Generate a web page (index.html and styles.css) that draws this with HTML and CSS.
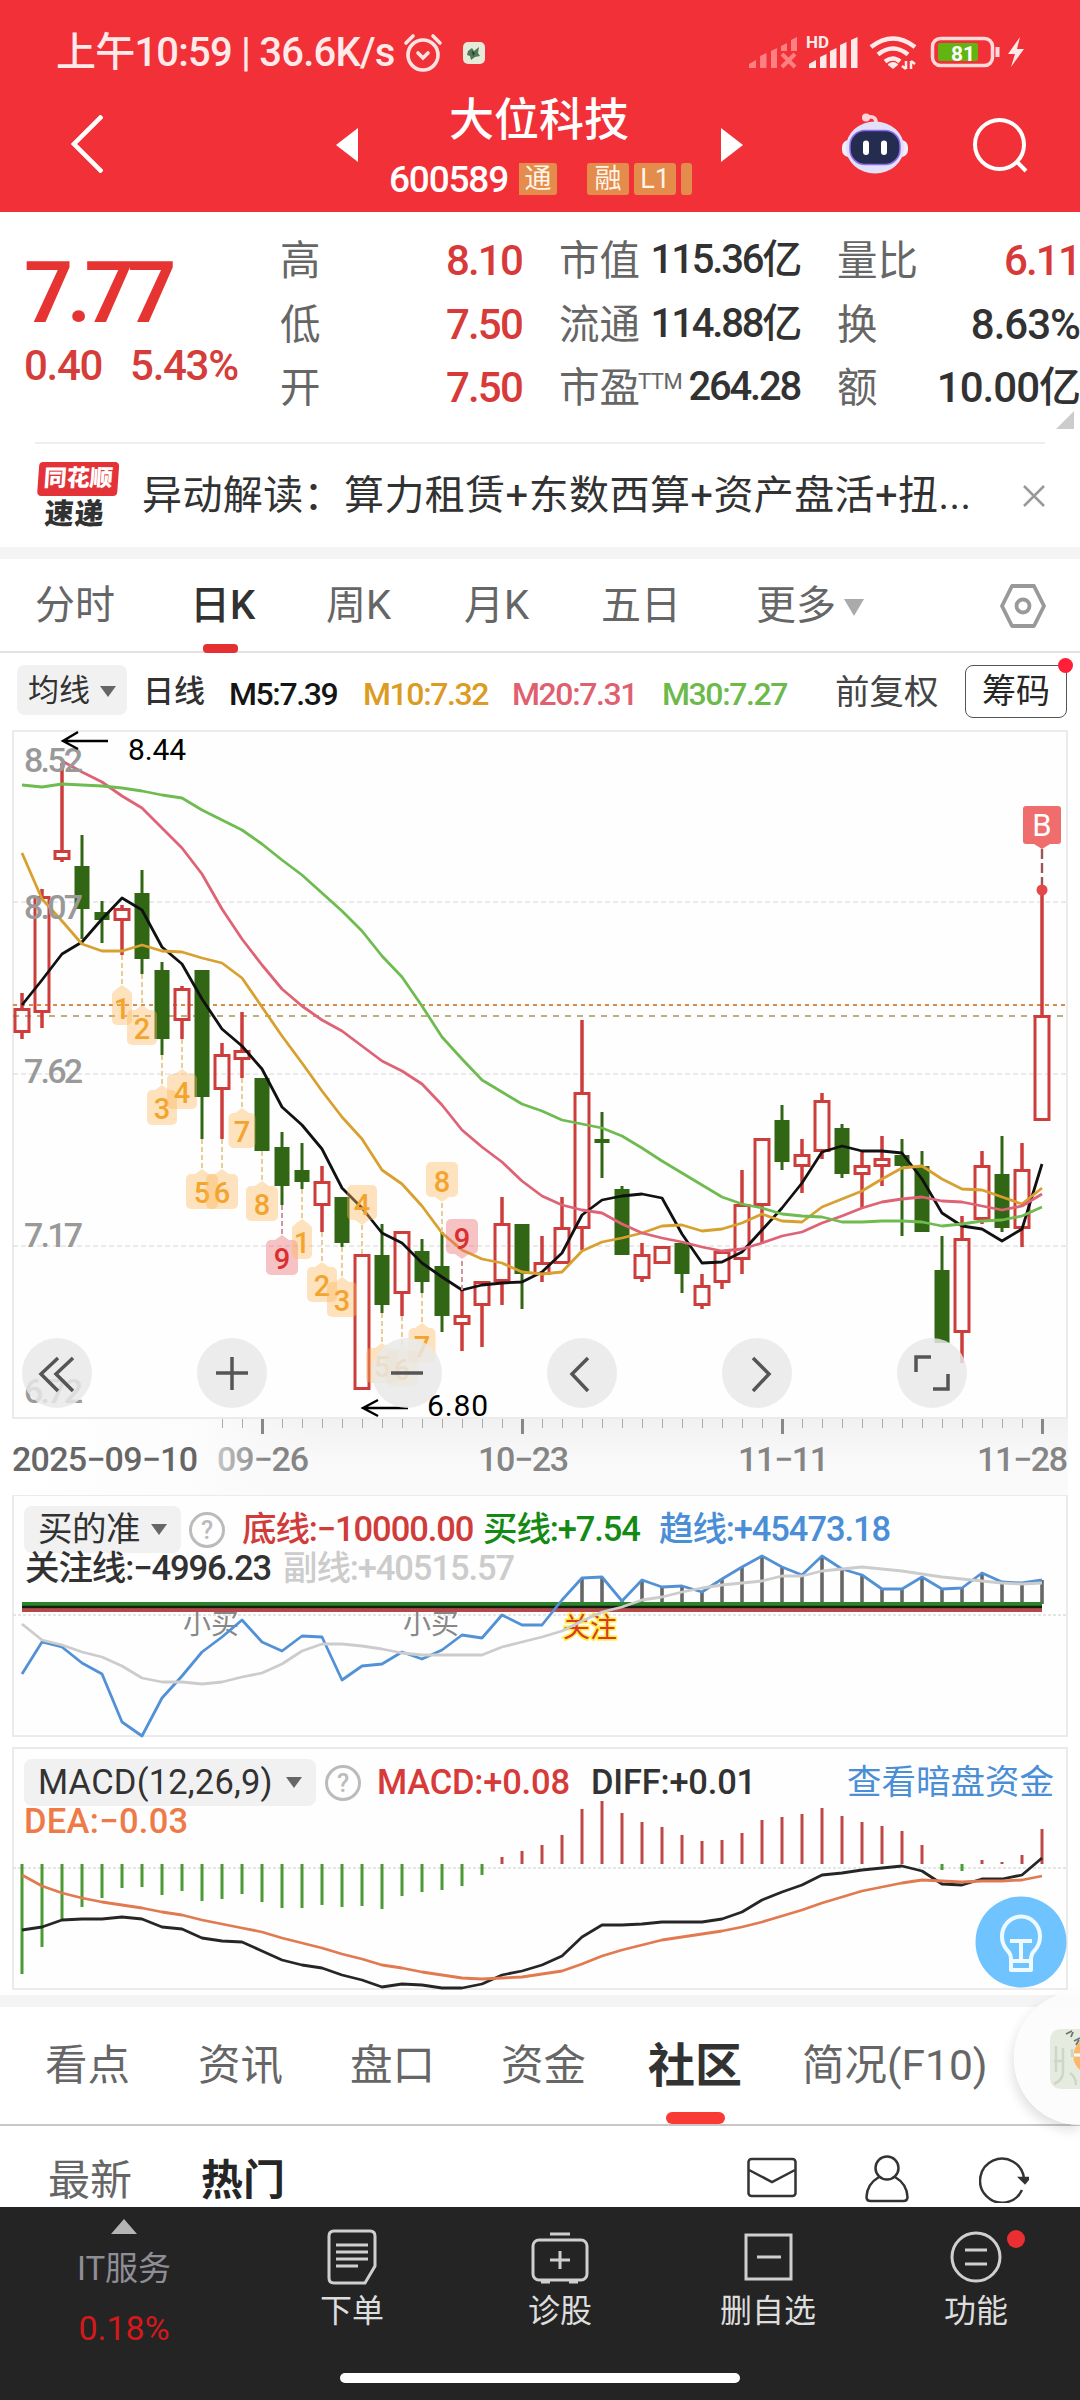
FILE: index.html
```html
<!DOCTYPE html>
<html lang="zh-CN">
<head>
<meta charset="utf-8">
<title>大位科技 600589</title>
<link rel="stylesheet" href="styles.css">
</head>
<body>
<header class="top">
  <div class="status">
    <span class="clock">上午10:59 | 36.6K/s</span>
    <svg class="alarm" width="40" height="40" viewBox="0 0 40 40" fill="none" stroke="#ffe3e3" stroke-width="3.6" stroke-linecap="round"><circle cx="20" cy="22" r="15"/><path d="M3 10 10 3M37 10 30 3M15 20l5 5 5-5"/></svg>
    <svg class="app" width="22" height="22" viewBox="0 0 22 22"><rect width="22" height="22" rx="5" fill="#e6ead9"/><path d="M5 9l4-3 2 3 5-4-1 6 2 3-5 1-4 3-1-4-3-1z" fill="#4f7a55"/><path d="M9 9l3 2-2 3z" fill="#1f3f2a"/></svg>
    <svg class="signals" width="280" height="40" viewBox="746 32 280 40">
      <path fill="#ff8083" d="M749 68v-4l7-4v8zM760 68V56l6.500-3v15zM771 68V51l6-3v20zM781 51v-5l6-3v8zM791 51V40l6-3v14z"/><path d="M782 54l13 13M795 54l-13 13" stroke="#ff8083" stroke-width="4"/>
      <text x="806" y="48" class="hd">HD</text>
      <path fill="#ffeaea" d="M809 68v-4l7-4v8zM820 68V57l6.500-3v14zM830 68V51l6.500-3v20zM840 68V45l6.500-3v26zM851 68V40l6.500-3v31z"/>
      <g fill="none" stroke="#ffeaea" stroke-width="4.600"><path d="M871 47q22-17 44 0M878 54.500q15-12 30 0M885 61.500q8-6 15 0"/></g>
      <path d="M888 64q5-4 10 0v1l-5 4-5-4z" fill="#ffeaea"/><path d="M906 61v8m-4-3 4 3M911 69v-8m4 3-4-3" stroke="#ffeaea" stroke-width="2.500" fill="none"/>
      <rect x="932.500" y="38.500" width="60" height="27" rx="8" fill="none" stroke="#ffd9da" stroke-width="3.500"/><rect x="938" y="43" width="40" height="18" rx="2" fill="#62b511"/><text x="951" y="61" class="bat">81</text><path d="M997.500 47v10" stroke="#ffd9da" stroke-width="4"/>
      <path d="M1020 37l-12 17h7l-4 13 13-18h-7z" fill="#ffeaea"/>
    </svg>
  </div>
  <div class="title-bar">
    <svg width="32" height="58" viewBox="0 0 32 58" fill="none" stroke="#fff" stroke-width="4.500"><path d="M31 1 3 29l28 28"/></svg>
    <svg width="22" height="34" viewBox="0 0 22 34"><path d="M22 0v34L0 17z" fill="#fff"/></svg>
    <div class="stock">
      <h1>大位科技</h1>
      <div class="code-row"><span class="code">600589</span><span class="tag first">通</span><span class="tag">融</span><span class="tag">L1</span><span class="tag sliver"></span></div>
    </div>
    <svg width="22" height="34" viewBox="0 0 22 34"><path d="M0 0v34l22-17z" fill="#fff"/></svg>
    <svg class="robot" width="66" height="62" viewBox="0 0 66 62"><path d="M24 4q11-2 10 7" fill="none" stroke="#ffd3da" stroke-width="3.500"/><circle cx="24" cy="4.500" r="4" fill="#ffd3da"/><rect y="27" width="66" height="17" rx="7" fill="#efedff"/><ellipse cx="33" cy="34.500" rx="29" ry="26" fill="#e3e1fa"/><rect x="8" y="17.500" width="50" height="34" rx="15" fill="#242d50" stroke="#8b6bf0" stroke-width="1.500"/><path d="M24 30.500v8.500M42 30.500v8.500" stroke="#fff" stroke-width="6" stroke-linecap="round"/></svg>
    <svg class="search" width="56" height="56" viewBox="0 0 56 56" fill="none" stroke="#fff" stroke-width="4"><circle cx="26.500" cy="26.500" r="24.500"/><path d="M43 43l10 10"/></svg>
  </div>
</header>

<section class="quote">
  <div class="price"><div class="last">7.77</div><div class="change"><span>0.40</span><span>5.43%</span></div></div>
  <dl class="stats">
    <dt>高</dt><dd class="up">8.10</dd><dt>市值</dt><dd class="tight">115.36亿</dd><dt>量比</dt><dd class="up">6.11</dd>
    <dt>低</dt><dd class="up">7.50</dd><dt>流通</dt><dd class="tight">114.88亿</dd><dt>换</dt><dd class="wide">8.63%</dd>
    <dt>开</dt><dd class="up">7.50</dd><dt>市盈<sup>TTM</sup></dt><dd class="tight">264.28</dd><dt>额</dt><dd class="wide">10.00亿</dd>
  </dl>
  <i class="corner"></i>
</section>

<section class="news">
  <div class="logo"><b>同花顺</b><em>速递</em></div>
  <p>异动解读：算力租赁+东数西算+资产盘活+扭...</p>
  <svg width="22" height="22" viewBox="0 0 22 22" stroke="#999" stroke-width="2.500"><path d="M1 1l20 20M21 1 1 21"/></svg>
</section>

<nav class="periods">
  <span>分时</span><span class="on">日K</span><span>周K</span><span>月K</span><span>五日</span><span class="more">更多<i class="tri light"></i></span>
  <svg width="46" height="44" viewBox="0 0 46 44" fill="none" stroke="#999" stroke-width="3.800" stroke-linejoin="round"><path d="M12 2h22l10 20-10 20H12L2 22z"/><circle cx="23" cy="22" r="6.500"/></svg>
</nav>

<div class="ma">
  <span class="pill">均线<i class="tri"></i></span><span class="k">日线</span><span class="n">M5:7.39</span><span class="n c10">M10:7.32</span><span class="n c20">M20:7.31</span><span class="n c30">M30:7.27</span><span class="adj">前复权</span><span class="chip">筹码</span>
</div>

<section class="chart">
  <svg id="kline" width="1080" height="765" viewBox="0 730 1080 765"></svg>
  <div class="controls">
    <button><svg viewBox="0 0 70 70"><path d="M36 20 19 36l17 17M51 20 34 36l17 17"/></svg></button>
    <button><svg viewBox="0 0 70 70"><path d="M35 19v33M19 35h32"/></svg></button>
    <button><svg viewBox="0 0 70 70"><path d="M19 35h32"/></svg></button>
    <button><svg viewBox="0 0 70 70"><path d="M41 20 25 36l16 17"/></svg></button>
    <button><svg viewBox="0 0 70 70"><path d="M31 20l16 16-16 17"/></svg></button>
    <button><svg viewBox="0 0 70 70"><path d="M19 34V19h15M36 51h15V36"/></svg></button>
  </div>
</section>

<section class="panel">
  <svg id="trend" width="1080" height="252" viewBox="0 1495 1080 252"></svg>
  <div class="legend l-trend">
    <span class="pill">买的准<i class="tri"></i></span><i class="help">?</i><span class="red">底线:−10000.00</span><span class="green">买线:+7.54</span><span class="blue">趋线:+45473.18</span>
  </div>
  <div class="legend l-trend2"><span>关注线:−4996.23</span><span class="grey">副线:+40515.57</span></div>
</section>

<section class="panel">
  <svg id="macd" width="1080" height="248" viewBox="0 1747 1080 248"></svg>
  <div class="legend l-macd">
    <span class="pill">MACD(12,26,9)<i class="tri"></i></span><i class="help">?</i><span class="red2">MACD:+0.08</span><span>DIFF:+0.01</span><a class="blue">查看暗盘资金</a>
  </div>
  <div class="legend l-macd2"><span class="orange">DEA:−0.03</span></div>
  <svg class="bulb" width="92" height="92" viewBox="0 0 92 92"><circle cx="46" cy="46" r="45.500" fill="#6fc3fe"/><g fill="none" stroke="#eefaff" stroke-width="4" stroke-linejoin="round"><path d="M36 74V63q0-5-4-9a19 20 0 1 1 28 0q-4 4-4 9v11zM37 65h18"/><path d="M35 45h22M46 45v20"/></g></svg>
</section>

<nav class="sections">
  <span>看点</span><span>资讯</span><span>盘口</span><span>资金</span><span class="on">社区</span><span>简况(F10)</span>
  <div class="floater"><svg width="30" height="60" viewBox="0 0 30 60"><path d="M12 0h18v60H12Q0 60 0 48V12Q0 0 12 0z" fill="#e6ebdf"/><path d="M6 17v26M13 19v24q0 8-9 12M4 32h9M20 44q6 4 6 12M22 20v8" stroke="#cdd6c8" stroke-width="2.500" fill="none"/><path d="M16 5l6-3M21 8l2-5M24 12l6-3M26 16l3-5" stroke="#6d766c" stroke-width="1.800" fill="none"/><path d="M30 13a18 18 0 0 0 0 28z" fill="#fbb868"/><path d="M24 26h6" stroke="#fff" stroke-width="3"/></svg></div>
</nav>

<div class="feed">
  <span>最新</span><span class="on">热门</span>
  <svg width="50" height="46" viewBox="0 0 50 46"><rect x="1.500" y="4" width="47" height="37" rx="3"/><path d="M2 15l23 12 23-12"/></svg>
  <svg width="44" height="48" viewBox="0 0 44 48"><circle cx="22" cy="13" r="11.500"/><path d="M14 22Q2 29 1.500 42q0 4 4 4h33q4 0 4-4Q42 29 30 22"/></svg>
  <svg width="50" height="48" viewBox="0 0 50 48"><path d="M43 35A22 22 0 1 1 45 24"/><path d="M41 23h9l-4 5z" fill="#333"/></svg>
</div>

<footer class="bar">
  <div class="index"><i></i><span>IT服务</span><b>0.18%</b></div>
  <div class="act"><svg viewBox="0 0 60 56"><path d="M12 2h36q5 0 5 5v30L43 54H12q-5 0-5-5V7q0-5 5-5zM14 16h32M14 23h32M14 30h32M14 37h22"/></svg><span>下单</span></div>
  <div class="act"><svg viewBox="0 0 60 56"><rect x="3" y="11" width="54" height="40" rx="6"/><path d="M20 5h20M30 22v18M20 31h20M11 53h9M39 53h9"/></svg><span>诊股</span></div>
  <div class="act"><svg viewBox="0 0 60 56"><path d="M8 6h45v44H8zM19 28h24"/></svg><span>删自选</span></div>
  <div class="act"><svg viewBox="0 0 60 56"><circle cx="30" cy="28" r="24"/><path d="M19 21h22M19 35h22"/></svg><span>功能</span><u></u></div>
  <div class="home"></div>
</footer>
<script src="chart.js"></script>
</body>
</html>
```
FILE: styles.css
```css
*{box-sizing:border-box;margin:0;padding:0}
body{width:1080px;height:2400px;overflow:hidden;background:#fff;color:#323232;font-family:Roboto,"Noto Sans CJK SC",sans-serif;font-size:40px;line-height:1;-webkit-font-smoothing:antialiased}
i,em{font-style:normal}
svg{display:block;flex:none}
span,dt,dd,p,b,a{white-space:nowrap}

.top{height:212px;background:#f13038;color:#fff}
.status{height:104px;display:flex;align-items:center;padding:2px 54px 0 56px}
.clock{width:347px;font-size:40px;font-weight:500;letter-spacing:-.8px;color:#ffe9e9}
.app{margin-left:20px}
.signals{margin:-2px 0 0 auto}
.hd{font-size:17px;font-weight:700;fill:#ffeaea}
.bat{font-size:21px;font-weight:700;fill:#fff}
.title-bar{height:108px;display:grid;grid-template-columns:265px 53px 332px 101px 131px 1fr;padding-left:71px;align-items:start}
.title-bar>svg{margin-top:11px}
.title-bar>svg:nth-of-type(2),.title-bar>svg:nth-of-type(3){margin-top:24px}
.title-bar .robot{margin:9px 0 0 20px}
.title-bar .search{margin:14px 0 0 20px}
.stock{width:304px;margin-top:-6px}
h1{font-size:45px;font-weight:500;line-height:46px;text-align:center;margin-left:-4px}
.code-row{display:flex;height:32px;margin-top:19px;align-items:center}
.code{width:130px;font-size:37px;font-weight:500;line-height:34px;padding-top:2px;letter-spacing:-1.2px}
.tag{width:42px;height:32px;margin-right:5px;background:#e48c4b;border-radius:3px;font-size:27px;line-height:33px;text-align:center;color:#fff4e8}
.tag.first{width:38px;margin-right:30px;border-radius:0 3px 3px 0}
.tag.sliver{width:11px;margin:0}

.quote{position:relative;height:230px;display:flex}
.price{width:281px;padding:43px 0 0 24px;color:#e63432}
.last{font-size:86px;line-height:76px;font-weight:600;letter-spacing:-6.5px}
.change{display:flex;gap:28px;margin-top:14px;font-size:42px;line-height:42px;font-weight:500;letter-spacing:-1.3px;color:#d43d3a}
.stats{display:grid;grid-template-columns:60px 181px 38px 90px 150px 38px 90px 152px;grid-template-rows:repeat(3,63.500px);padding-top:18px}
.stats dt:nth-of-type(3n+1){grid-column:1}
.stats dd:nth-of-type(3n+1){grid-column:2}
.stats dt:nth-of-type(3n+2){grid-column:4}
.stats dd:nth-of-type(3n+2){grid-column:5}
.stats dt:nth-of-type(3n){grid-column:7}
.stats dd:nth-of-type(3n){grid-column:8}
dt,dd{line-height:62px}
dt{position:relative;left:-1px;font-size:40.500px;color:#666}
dd{font-size:42px;font-weight:500;letter-spacing:-1.8px;display:flex;justify-content:flex-end}
dd.up{color:#d73a38}
dd.tight{font-size:40px;letter-spacing:-2.2px;line-height:60px}
dd.wide{letter-spacing:-1px}
sup{position:absolute;left:79px;top:9px;font-size:22px;line-height:32px;letter-spacing:-.5px}
.corner{position:absolute;right:6px;bottom:13px;border-left:18px solid transparent;border-bottom:18px solid #ccc}

.news{height:105px;display:grid;grid-template-columns:107px 881px 22px;align-items:center;margin-left:35px;width:1010px;border-top:2px solid #eee}
.news p{font-size:40px;letter-spacing:.4px}
.logo{width:82px;height:68px;transform:skewX(-4deg);text-align:center}
.logo b{display:block;height:34px;margin-left:2px;background:#e43338;border-radius:4px;color:#fff;font-size:23px;font-weight:900;line-height:34px}
.logo em{display:block;font-size:29px;line-height:36px;font-weight:900;letter-spacing:1px}

.periods{height:106px;border-top:12px solid #f4f4f4;border-bottom:2px solid #e2e2e2;display:grid;grid-template-columns:155px 136px 138px 137px 155px 244px 46px;padding-left:35px;color:#666;line-height:94px}
.periods svg{margin-top:25px}
.periods .on{position:relative;color:#323232;font-weight:500}
.periods .on::after{content:"";position:absolute;left:13px;bottom:0;width:35px;height:9px;border-radius:4px;background:#e42f33}
.tri{display:inline-block;border:8px solid transparent;border-top:11px solid #666;border-bottom:0}
.tri.light{border-width:10px;border-top:17px solid #aaa;border-bottom:0;margin-left:8px;vertical-align:3px}

.ma{height:77px;display:grid;grid-template-columns:126px 86px 134px 149px 150px 173px 130px 102px;padding:12px 0 0 17px;line-height:54px;font-size:31px}
.pill{background:#f1f1f1;border-radius:8px;display:flex;align-items:center;justify-content:space-between}
.ma .pill{width:110px;height:50px;padding:2px 11px 0}
.k{font-weight:500}
.n{font-size:32px;font-weight:500;letter-spacing:-1.400px;line-height:58px;color:#151515}
.c10{color:#dc9b23}.c20{color:#df6070}.c30{color:#6cb94c}
.adj{font-size:34.500px;color:#444}
.chip{position:relative;height:53px;border:1.500px solid #555;border-radius:8px;font-size:34px;line-height:51px;text-align:center;color:#262626}
.chip::after{content:"";position:absolute;right:-7px;top:-8px;width:15px;height:15px;border-radius:50%;background:#ff1f36}

.chart,.panel{position:relative}
.controls{position:absolute;left:22px;top:608px;display:flex;gap:105px}
.controls button{width:70px;height:70px;border:0;border-radius:50%;background:rgba(232,232,232,.84)}
.controls svg{width:70px;height:70px;fill:none;stroke:#555;stroke-width:3.500}
svg text{font-family:Roboto,"Noto Sans CJK SC",sans-serif}
.axis{font-size:34px;font-weight:500;fill:#999}
.peak{font-size:30px;fill:#000}
.num{font-size:29px;font-weight:500;text-anchor:middle;fill:#f3a42e}
.num.nine{fill:#d9302f}
.date{font-size:34px;font-weight:500;fill:#858585}
.date.first{fill:#666}
.date.faded{fill:url(#ink)}
.flag{font-size:31px;fill:#fff;text-anchor:middle}
.note{font-size:28px;fill:#888}
.watch{font-size:27px;fill:#d83a2b;stroke:#ffee3c;stroke-width:3;paint-order:stroke}

.legend{position:absolute;display:grid;line-height:47px;font-size:34.500px;font-weight:500}
.legend .pill{height:47px;padding:0 14px;font-weight:400}
.legend>span{letter-spacing:-1.1px}
.help{width:36px;height:36px;margin-top:6px;border:3px solid #bbb;border-radius:50%;font-size:25px;line-height:31px;text-align:center;color:#bbb}
.l-trend{left:24px;top:11px;grid-template-columns:157px 8px 53px 241px 176px 230px}
.l-trend .help,.l-macd .help{grid-column:3}
.l-trend .pill{letter-spacing:-.5px}
.l-trend2{left:25px;top:50px;grid-template-columns:258px 230px}
.l-macd{left:24px;top:12px;grid-template-columns:292px 9px 52px 214px 256px 210px}
.l-macd .pill{letter-spacing:.2px}
.l-macd>span{letter-spacing:-.2px}
.l-macd a{font-weight:400}
.l-macd2{left:24px;top:51px}
.l-macd2>span{letter-spacing:.3px}
.red{color:#cf3c39}.red2{color:#d63a39}.green{color:#138a13}.blue{color:#4a8ed8}.grey{color:#ccc}.orange{color:#ee7a48}
.bulb{position:absolute;left:975px;top:149px}

.sections{position:relative;height:131px;border-top:12px solid #f4f4f4;border-bottom:2px solid #c7c7c7;display:grid;grid-template-columns:153px 152px 151px 147px 154px 260px;padding-left:45px;font-size:42.500px;line-height:117px;color:#666}
.sections .on{position:relative;font-size:47px;font-weight:700;color:#323232}
.sections .on::after{content:"";position:absolute;left:18px;bottom:0;width:59px;height:12px;border-radius:6px;background:#fa3a34}
.floater{position:absolute;right:0;top:-16px;width:66px;height:134px;border-radius:67px 0 0 67px;background:rgba(252,252,252,.9);box-shadow:-2px 6px 12px rgba(0,0,0,.12);padding:38px 0 0 36px}
.feed{height:81px;display:grid;grid-template-columns:153px 546px 118px 114px 50px;padding-left:48px;font-size:42px;line-height:109px;color:#666}
.feed .on{color:#262626;font-weight:700}
.feed svg{margin-top:29px;fill:none;stroke:#333;stroke-width:2.500}

.bar{position:relative;height:193px;background:#242424;display:grid;grid-template-columns:248px repeat(4,208px);color:#ddd}
.index{display:flex;flex-direction:column;align-items:center;padding-top:12px}
.index i{border:13px solid transparent;border-bottom:15px solid #b5b5b5;border-top:0}
.index span{font-size:33px;line-height:46px;margin-top:12px;color:#8f8d96}
.index b{font-size:34px;font-weight:400;line-height:40px;margin-top:16px;color:#d5191b}
.act{position:relative;display:flex;flex-direction:column;align-items:center;padding-top:22px}
.act svg{width:60px;height:56px;fill:none;stroke:#cfcfcf;stroke-width:3}
.act span{font-size:32px;line-height:44px;margin-top:4px}
.act u{position:absolute;left:135px;top:23px;width:18px;height:18px;border-radius:50%;background:#e92f31}
.home{position:absolute;left:340px;bottom:17px;width:400px;height:10px;border-radius:5px;background:#fff}
```
FILE: chart.js
```js
const X = i => 22 + 20 * i;
const RED = '#cd3d3b', GREEN = '#306614';

/* r = rising, g = falling; then high, body top, body bottom, low */
const candles = `r993,1008,1033,1039 r889,896,1013,1028 r763,850,860,862 g835,866,909,939 g901,912,920,943 r905,908,921,955 g870,893,959,974
g962,970,1039,1055 r986,988,1021,1039 g970,970,1097,1139 r1043,1054,1090,1139 r1012,1050,1060,1078 g1078,1078,1151,1151 g1132,1147,1186,1205
g1143,1170,1182,1189 r1166,1181,1206,1232 g1197,1197,1243,1247 r1254,1254,1390,1390 g1224,1255,1305,1313 r1231,1231,1294,1316 g1239,1251,1282,1293
g1232,1266,1316,1332 r1290,1315,1325,1351 r1281,1281,1306,1347 r1197,1223,1282,1305 g1224,1224,1274,1309 r1236,1262,1275,1282 r1197,1227,1264,1264
r1020,1092,1229,1250 g1112,1139,1143,1178 g1186,1189,1255,1255 r1243,1254,1279,1282 r1246,1246,1264,1264 g1243,1243,1274,1293 r1274,1285,1306,1309
r1251,1251,1283,1289 r1170,1204,1260,1274 r1138,1138,1206,1243 g1105,1120,1162,1170 r1139,1154,1167,1193 r1093,1100,1152,1159 g1124,1128,1174,1178
r1152,1165,1175,1208 r1136,1158,1167,1186 g1139,1155,1166,1236 g1151,1166,1232,1232 g1236,1270,1343,1343 r1216,1238,1333,1363 r1151,1165,1220,1224
g1136,1174,1228,1232 r1143,1169,1229,1247 r888,1015,1121,1121`.split(/\s+/);

const m5 = [1005,980,954,942,919,898,910,947,964,999,1029,1046,1069,1107,1125,1149,1188,1208,1233,1243,1263,1277,1290,1285,1283,1282,1272,1253,1215,1200,1196,1194,1198,1234,1263,1262,1252,1230,1208,1183,1152,1146,1151,1151,1153,1179,1213,1226,1229,1241,1229,1164];
const m10 = [853,899,921,944,951,951,945,951,952,958,963,978,1007,1036,1063,1091,1117,1139,1170,1184,1206,1233,1250,1259,1263,1272,1274,1272,1251,1242,1238,1233,1226,1225,1231,1229,1223,1214,1221,1222,1207,1199,1191,1179,1168,1166,1179,1189,1190,1197,1204,1188];
const m20 = [761,772,782,796,808,828,848,874,909,939,965,989,1006,1020,1031,1046,1061,1071,1084,1105,1130,1147,1162,1181,1196,1205,1210,1213,1224,1233,1238,1242,1247,1251,1249,1243,1236,1232,1223,1216,1208,1202,1199,1197,1201,1202,1206,1210,1206,1194];
const m30 = [785,787,784,785,786,788,791,795,798,810,820,830,844,860,875,893,911,931,956,977,1006,1037,1059,1080,1092,1104,1111,1120,1124,1128,1136,1148,1161,1173,1185,1197,1204,1208,1214,1216,1217,1222,1222,1221,1221,1222,1226,1224,1221,1220,1216,1207];

/* index, label, tip y, end y on the candle, 1 = label above */
const marks = [[5,1,985,955],[6,2,1005,974],[7,3,1085,1055],[8,4,1069,1039],[9,5,1169,1139],[10,6,1169,1139],[11,7,1108,1078],[12,8,1181,1151],[13,9,1235,1205],[14,1,1219,1189],[15,2,1262,1232],[16,3,1277,1247],[17,4,1225,1254,1],[18,5,1343,1313],[19,6,1346,1316],[20,7,1323,1293],[21,8,1202,1232,1],[22,9,1259,1290,1]];
const widths = {1:20,2:30,3:30,4:30,5:32,6:32,7:27,8:32,9:32};

const line = (a, c, w, from = 0) => `<polyline fill="none" stroke="${c}" stroke-width="${w}" stroke-linejoin="round" points="${a.map((y, k) => X(k + from) + ',' + y).join(' ')}"/>`;
const seg = (x1, y1, x2, y2, c, w, dash) => `<path d="M${x1} ${y1}L${x2} ${y2}" fill="none" stroke="${c}" stroke-width="${w}"${dash ? ` stroke-dasharray="${dash}"` : ''}/>`;
const text = (x, y, s, cls, len) => `<text x="${x}" y="${y}" class="${cls}"${len ? ` textLength="${len}"` : ''}>${s}</text>`;

function kline() {
  let s = `<defs><linearGradient id="fade" x1="0" x2="0" y1="0" y2="1"><stop offset="0" stop-color="#f1f1f1"/><stop offset=".55" stop-color="#f9f9f9"/><stop offset="1" stop-color="#fafafa"/></linearGradient>
  <linearGradient id="edge" x1="0" x2="1" y1="0" y2="0"><stop offset="0" stop-color="#fff"/><stop offset=".6" stop-color="#fcfcfc"/><stop offset="1" stop-color="#f9f9f9" stop-opacity="0"/></linearGradient>
  <linearGradient id="ink" gradientUnits="userSpaceOnUse" x1="215" x2="265" y1="0" y2="0"><stop offset="0" stop-color="#c8c8c8"/><stop offset="1" stop-color="#858585"/></linearGradient></defs>
  <rect x="13" y="1419" width="1055" height="76" fill="url(#fade)"/><rect x="0" y="1419" width="330" height="76" fill="url(#edge)"/>
  <rect x="13" y="731" width="1054" height="687" fill="#fefefe" stroke="#ebebeb" stroke-width="2"/>`;
  for (const y of [902, 1074, 1246]) s += seg(13, y, 1066, y, '#e3e3e3', 1.5, '5 3');
  s += seg(13, 1005, 1066, 1005, '#d98b4a', 2, '4 4') + seg(13, 1016, 1066, 1016, '#bbb07a', 2, '6 6');
  candles.forEach((c, i) => {
    const [h, t, b, l] = c.slice(1).split(',').map(Number), x = X(i);
    if (c[0] === 'r') {
      if (h < t) s += seg(x, h, x, t, RED, 3.5);
      if (l > b) s += seg(x, b, x, l, RED, 3.5);
      s += `<rect x="${x - 7}" y="${t + 1.5}" width="14" height="${b - t - 3}" fill="none" stroke="${RED}" stroke-width="3"/>`;
    } else s += seg(x, h, x, l, GREEN, 3) + `<rect x="${x - 7.5}" y="${t}" width="15" height="${b - t}" fill="${GREEN}"/>`;
  });
  s += line(m5, '#111', 2.8) + line(m10, '#d8a02f', 2.8) + line(m20, '#de6375', 2.8, 2) + line(m30, '#6ebb50', 2.8);
  [['8.52', 772], ['8.07', 919], ['7.62', 1083], ['7.17', 1247], ['6.72', 1403]].forEach(([v, y]) => s += text(24, y, v, 'axis', 59));
  for (const [i, n, tip, end, up] of marks) {
    const x = X(i), w = widths[n] / 2, nine = n === 9, d = up ? -1 : 1;
    s += seg(x, end, x, tip, nine ? '#d3959b' : '#e9cd97', 2, '5 3');
    s += `<g fill="${nine ? '#eb6a6e' : '#fcba5c'}" fill-opacity=".4"><rect x="${x - w}" y="${up ? tip - 40 : tip + 5}" width="${2 * w}" height="35" rx="5"/><path d="M${x - 7} ${tip + 5 * d}L${x} ${tip}L${x + 7} ${tip + 5 * d}z"/></g>`;
    s += text(x, up ? tip - 10 : tip + 34, n, 'num' + (nine ? ' nine' : ''));
  }
  s += '<rect x="1023" y="806" width="38" height="38" rx="3" fill="#ef6d6d"/><path d="M1034 844h16l-8 5z" fill="#ef6d6d"/>' + text(1042, 836, 'B', 'flag')
    + seg(1042, 849, 1042, 886, '#98555a', 2.4, '10 4') + '<circle cx="1042" cy="890" r="5.5" fill="#e5484a"/>';
  s += '<path d="M78 732L63 741L78 749M63 741H108M378 1400L363 1408L378 1416M363 1408H408" fill="none" stroke="#000" stroke-width="2.4"/>';
  s += text(128, 760, '8.44', 'peak', 58) + text(427, 1416, '6.80', 'peak', 61);
  for (let i = 10; i < 52; i++) s += (i - 12) % 13 ? seg(X(i) + .5, 1419, X(i) + .5, 1428, '#aaa', 1) : seg(X(i) + .5, 1419, X(i) + .5, 1434, '#888', 3);
  s += text(12, 1471, '2025−09−10', 'date first', 186) + text(217, 1471, '09−26', 'date faded', 92)
    + text(478, 1471, '10−23', 'date', 91) + text(738, 1471, '11−11', 'date', 91) + text(977, 1471, '11−28', 'date', 91);
  document.getElementById('kline').innerHTML = s;
}

const trendLine = [1674,1642,1647,1663,1674,1722,1736,1698,1676,1652,1637,1620,1642,1651,1636,1637,1680,1666,1664,1652,1659,1650,1635,1638,1615,1625,1625,1600,1578,1577,1601,1580,1587,1586,1592,1579,1567,1556,1567,1575,1556,1569,1575,1589,1589,1577,1589,1588,1573,1582,1583,1580];
const subLine = [1624,1640,1645,1652,1657,1666,1678,1682,1682,1684,1682,1677,1673,1664,1651,1644,1644,1646,1649,1653,1655,1655,1655,1655,1647,1642,1637,1631,1621,1612,1607,1600,1597,1592,1588,1585,1583,1581,1576,1576,1571,1569,1567,1569,1571,1574,1577,1579,1581,1583,1584,1583];

function trend() {
  let s = '<rect x="13" y="1495" width="1054" height="241" fill="#fefefe" stroke="#ebebeb" stroke-width="2"/>' + seg(13, 1615, 1066, 1615, '#ddd', 1.5, '3 2');
  s += text(183, 1634, '小买', 'note') + text(403, 1634, '小买', 'note') + text(563, 1637, '关注', 'watch');
  trendLine.forEach((y, i) => { if (i > 27) s += seg(X(i), y, X(i), 1604, '#666', 3.6); });
  s += seg(22, 1604, 1042, 1604, '#2b8529', 4) + seg(22, 1607.3, 1042, 1607.3, '#151c12', 3) + seg(22, 1610.3, 1042, 1610.3, '#b94645', 3.4);
  s += line(trendLine, '#5291d6', 2.8) + line(subLine, '#ccc', 2.8);
  document.getElementById('trend').innerHTML = s;
}

const bars = [1974,1947,1919,1907,1898,1888,1887,1895,1891,1901,1899,1894,1902,1908,1908,1905,1907,1906,1909,1896,1892,1890,1886,1875,1857,1851,1845,1835,1809,1801,1813,1822,1827,1835,1841,1840,1833,1820,1817,1814,1808,1816,1822,1826,1831,1845,1870,1871,1860,1862,1855,1829];
const diff = [1930,1927,1920,1919,1919,1917,1919,1927,1929,1938,1941,1942,1951,1960,1965,1968,1975,1980,1987,1984,1985,1988,1988,1984,1975,1971,1965,1956,1937,1925,1925,1924,1922,1922,1922,1919,1912,1900,1892,1885,1875,1873,1870,1868,1866,1871,1884,1885,1879,1879,1875,1858];
const dea = [1875,1886,1893,1898,1902,1905,1908,1912,1915,1920,1924,1928,1932,1938,1943,1948,1954,1959,1965,1968,1972,1975,1978,1979,1978,1977,1974,1971,1964,1956,1950,1945,1940,1937,1934,1931,1927,1922,1916,1910,1903,1897,1891,1887,1883,1880,1881,1882,1881,1881,1880,1876];

function macd() {
  let s = '<rect x="13" y="1748" width="1054" height="241" fill="#fefefe" stroke="#ebebeb" stroke-width="2"/>' + seg(13, 1868, 1066, 1868, '#ddd', 1.5, '3 2');
  bars.forEach((y, i) => s += seg(X(i), 1864, X(i), y, y > 1864 ? '#4a9b34' : '#be4846', 3));
  s += line(diff, '#262626', 2.8) + line(dea, '#e27a50', 2.8);
  document.getElementById('macd').innerHTML = s;
}
kline(); trend(); macd();
```
